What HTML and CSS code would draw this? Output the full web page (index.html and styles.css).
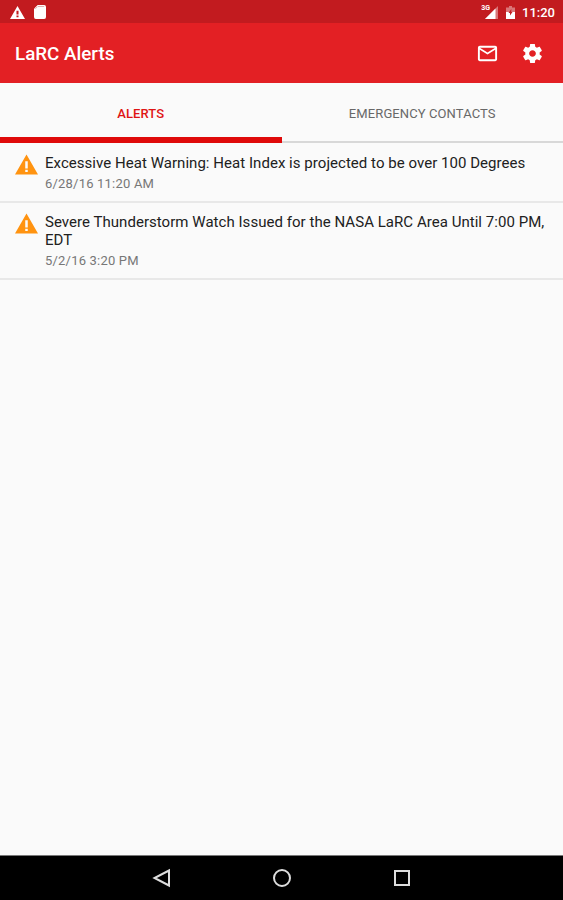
FILE: index.html
```html
<!DOCTYPE html>
<html lang="en">
<head>
    <meta charset="UTF-8">
    <meta name="viewport" content="width=device-width, initial-scale=1.0">
    <title>LaRC Alerts</title>
    <link rel="stylesheet" href="styles.css">
</head>
<body>
    <!-- Status bar -->
    <div class="status-bar">
        <div class="status-left">
            <svg class="status-warning" viewBox="1 2 22 19"><path d="M1 21h22L12 2 1 21zm12.500-2.500h-3v-2.500h3v2.500zm0-4h-3V9h3v5.500z"/></svg>
            <svg class="status-sd" viewBox="0 0 13 15"><path d="M4 0h7a2 2 0 0 1 2 2v11a2 2 0 0 1-2 2H2a2 2 0 0 1-2-2V4z"/><path class="sd-pins" d="M4 1.500h7M1.500 4l2-2"/></svg>
        </div>
        <div class="status-right">
            <span class="network">3G</span>
            <svg class="signal" viewBox="0 0 13 13"><path class="faded" d="M13 0v13H0z"/><path d="M10.500 2.500V13H0z"/></svg>
            <svg class="battery" viewBox="0 0 9 13"><path class="faded" d="M3 0h3v1.500h3V7H0V1.500h3z"/><path d="M0 6h9v7H0z"/><path class="bolt" d="M5.300 3L2.500 7h1.500v2.500L6.500 6H5.300z"/></svg>
            <span class="clock">11:20</span>
        </div>
    </div>

    <!-- App bar -->
    <header class="app-bar">
        <h1>LaRC Alerts</h1>
        <div class="actions">
            <svg viewBox="0 0 24 24"><path d="M20 4H4c-1.100 0-1.990.9-1.990 2L2 18c0 1.100.9 2 2 2h16c1.100 0 2-.9 2-2V6c0-1.100-.9-2-2-2zm0 14H4V8l8 5 8-5v10zm-8-7L4 6h16l-8 5z"/></svg>
            <svg viewBox="0 0 24 24"><path d="M19.430 12.980c.04-.32.07-.64.07-.98s-.03-.66-.07-.98l2.110-1.650c.19-.15.24-.42.12-.64l-2-3.460c-.12-.22-.39-.3-.61-.22l-2.490 1c-.52-.4-1.080-.73-1.690-.98l-.38-2.650C14.460 2.180 14.250 2 14 2h-4c-.25 0-.46.18-.49.42l-.38 2.650c-.61.25-1.170.59-1.690.98l-2.490-1c-.23-.09-.49 0-.61.22l-2 3.460c-.13.22-.07.49.12.64l2.110 1.650c-.04.32-.07.65-.07.98s.03.66.07.98l-2.110 1.650c-.19.15-.24.42-.12.64l2 3.460c.12.22.39.3.61.22l2.490-1c.52.4 1.080.73 1.690.98l.38 2.650c.03.24.24.42.49.42h4c.25 0 .46-.18.49-.42l.38-2.650c.61-.25 1.170-.59 1.690-.98l2.490 1c.23.09.49 0 .61-.22l2-3.460c.12-.22.07-.49-.12-.64l-2.110-1.650zM12 15.500c-1.930 0-3.500-1.570-3.500-3.500s1.570-3.500 3.500-3.500 3.500 1.570 3.500 3.500-1.570 3.500-3.500 3.500z"/></svg>
        </div>
    </header>

    <!-- Tabs -->
    <nav class="tabs">
        <div class="tab active"><span>ALERTS</span></div>
        <div class="tab"><span>EMERGENCY CONTACTS</span></div>
    </nav>

    <!-- Alert list -->
    <main class="alert-list">
        <div class="alert">
            <svg class="alert-icon" viewBox="1 2 22 19"><path d="M1 21h22L12 2 1 21zm12.200-2.300h-2.400v-2.200h2.400v2.200zm0-3.400h-2.400V8.500h2.400v6.800z"/></svg>
            <div class="alert-text">
                <div class="alert-title">Excessive Heat Warning: Heat Index is projected to be over 100 Degrees</div>
                <div class="alert-date">6/28/16 11:20 AM</div>
            </div>
        </div>
        <div class="alert">
            <svg class="alert-icon" viewBox="1 2 22 19"><path d="M1 21h22L12 2 1 21zm12.200-2.300h-2.400v-2.200h2.400v2.200zm0-3.400h-2.400V8.500h2.400v6.800z"/></svg>
            <div class="alert-text">
                <div class="alert-title">Severe Thunderstorm Watch Issued for the NASA LaRC Area Until 7:00 PM, EDT</div>
                <div class="alert-date">5/2/16 3:20 PM</div>
            </div>
        </div>
    </main>

    <!-- Navigation bar -->
    <footer class="nav-bar">
        <svg viewBox="0 0 20 20"><path d="M17 2.500v15L2.500 10z"/></svg>
        <svg viewBox="0 0 20 20"><circle cx="10" cy="10" r="8"/></svg>
        <svg viewBox="0 0 20 20"><rect x="3" y="3" width="14" height="14"/></svg>
    </footer>
</body>
</html>
```

FILE: styles.css
```css
body {
    margin: 0;
    height: 900px;
    display: flex;
    flex-direction: column;
    background-color: #fafafa;
    color: #212121;
    font-family: Roboto, sans-serif;
    overflow: hidden;
}

svg {
    display: block;
    flex: none;
}

/* Status bar */
.status-bar {
    height: 23px;
    display: flex;
    justify-content: space-between;
    align-items: center;
    padding: 1px 8px 0 10px;
    box-sizing: border-box;
    background-color: #c21b1f;
    color: #fff;
    fill: #fff;
}

.status-left,
.status-right {
    display: flex;
    align-items: center;
}

.status-warning {
    width: 15px;
    height: 13px;
    margin-right: 9px;
}

.status-sd {
    width: 12px;
    height: 14px;
}

.sd-pins {
    fill: none;
    stroke: #dba6a6;
}

.network {
    font-size: 7px;
    font-weight: 700;
    line-height: 7px;
    margin-bottom: 7px;
}

.signal {
    width: 13px;
    height: 13px;
    margin-left: -5px;
}

.battery {
    width: 9px;
    height: 13px;
    margin: 0 7px 0 8px;
}

.faded {
    opacity: 0.4;
}

.bolt {
    fill: #c21b1f;
}

.clock {
    font-size: 13px;
    font-weight: 500;
}

/* App bar */
.app-bar {
    height: 60px;
    display: flex;
    justify-content: space-between;
    align-items: center;
    padding: 0 19px 0 15px;
    box-sizing: border-box;
    background-color: #e32024;
    color: #fff;
}

.app-bar h1 {
    margin: 1px 0 0;
    font-size: 18.800px;
    font-weight: 500;
}

.actions {
    display: flex;
    gap: 22px;
    fill: #fff;
}

.actions svg {
    width: 23px;
    height: 23px;
}

/* Tabs */
.tabs {
    height: 60px;
    display: flex;
}

.tab {
    flex: 1;
    display: flex;
    justify-content: center;
    padding-top: 23px;
    box-sizing: border-box;
    border-bottom: 2px solid #d8d8d8;
    font-size: 13px;
    line-height: 16px;
    letter-spacing: 0.1px;
    color: #686868;
}

.tab.active {
    border-bottom: 6px solid #df0a0a;
    color: #df1414;
    font-weight: 500;
}

/* Alert list */
.alert-list {
    flex: 1;
}

.alert {
    display: flex;
    padding: 10.500px 15px 9.500px;
    border-bottom: 2px solid #e8e8e8;
}

.alert-icon {
    width: 23px;
    height: 21px;
    margin-right: 7px;
    fill: #ff9310;
}

.alert-text {
    padding-top: 1px;
}

.alert-title {
    font-size: 15px;
    line-height: 17.500px;
    letter-spacing: 0.040px;
}

.alert-date {
    margin-top: 4px;
    font-size: 13px;
    line-height: 15px;
    letter-spacing: 0.200px;
    color: #777;
}

/* Navigation bar */
.nav-bar {
    height: 45px;
    display: flex;
    justify-content: center;
    align-items: center;
    gap: 100px;
    border-top: 1px solid #777;
    box-sizing: border-box;
    background-color: #000;
}

.nav-bar svg {
    width: 20px;
    height: 20px;
    fill: none;
    stroke: #ddd;
    stroke-width: 2;
}
```
